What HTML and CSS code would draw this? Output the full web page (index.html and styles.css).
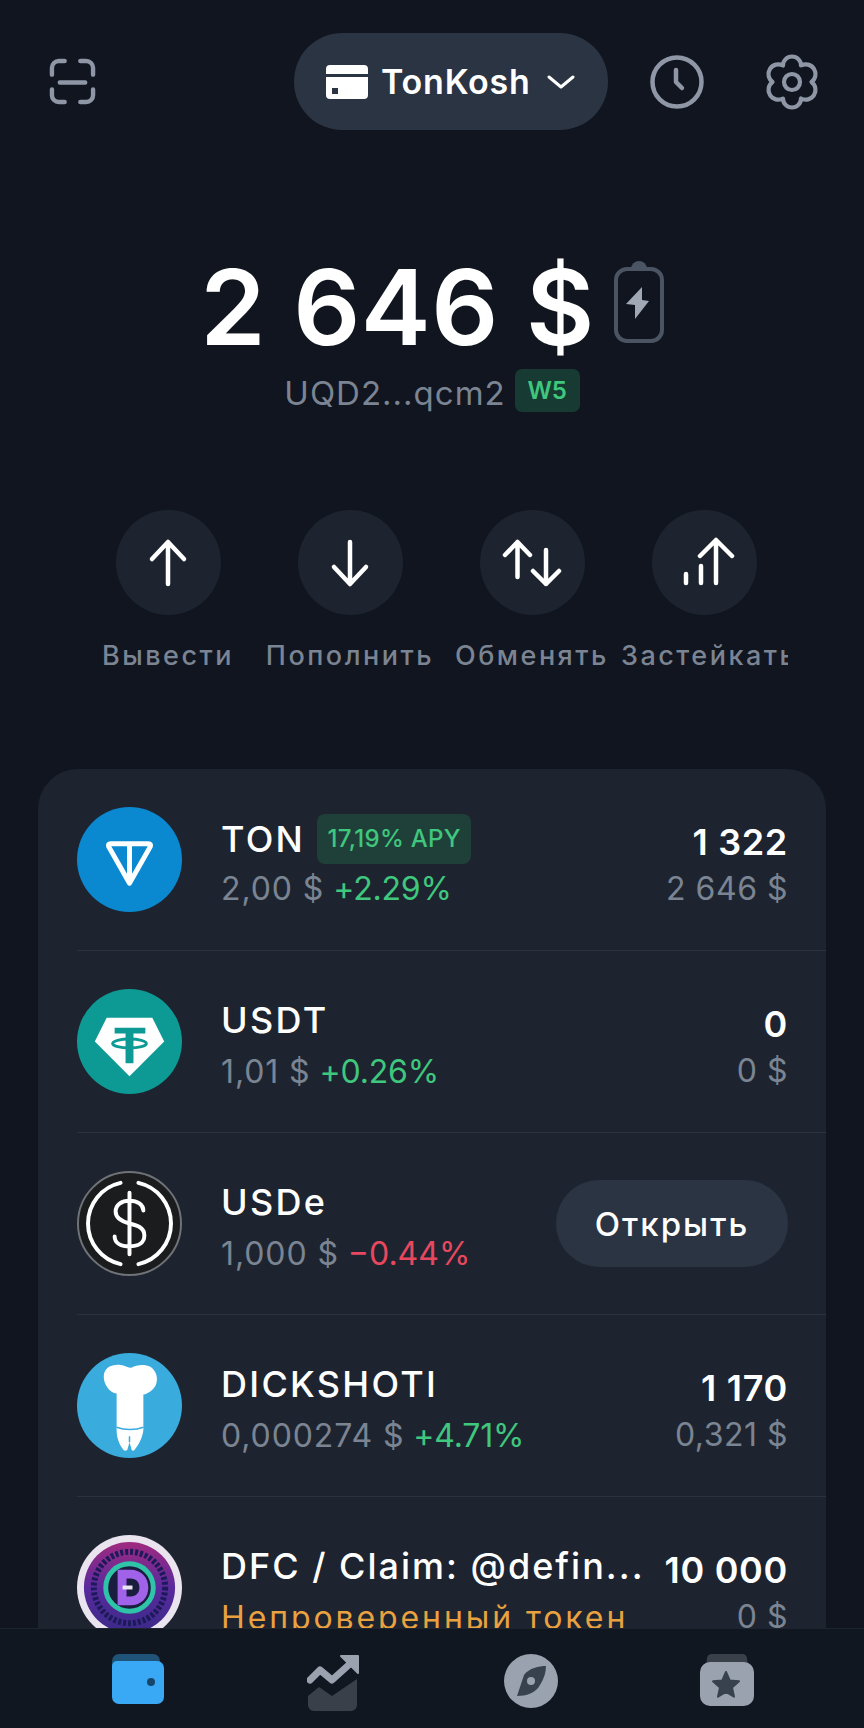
FILE: index.html
```html
<!DOCTYPE html>
<html lang="ru">
<head>
<meta charset="utf-8">
<title>TonKosh</title>
<link rel="stylesheet" href="styles.css">
</head>
<body>
<div class="app">
  <main class="content">
    <header class="topbar">
      <svg class="ic-scan" viewBox="0 0 48 48" fill="none" stroke="#8f97a6" stroke-width="4.5" stroke-linecap="round"><path d="M3 17V10a7 7 0 0 1 7-7h6M32 3h6a7 7 0 0 1 7 7v7M3 32v6a7 7 0 0 0 7 7h6M32 45h6a7 7 0 0 0 7-7v-6M11 25h26"/></svg>
      <div class="wallet-pill">
        <svg class="ic-card" viewBox="0 0 42 34"><path fill="#fff" d="M4 0h34a4 4 0 0 1 4 4v5H0V4a4 4 0 0 1 4-4zM0 12h42v18a4 4 0 0 1-4 4H4a4 4 0 0 1-4-4zm6 11v6h6v-6z"/></svg>
        <span class="wallet-name">TonKosh</span>
        <svg class="ic-chev" viewBox="0 0 28 16" fill="none" stroke="#fff" stroke-width="3" stroke-linecap="round" stroke-linejoin="round"><path d="M2 3l12 10L26 3"/></svg>
      </div>
      <div class="top-right">
        <svg class="ic-clock" viewBox="0 0 54 54" fill="none" stroke="#8f97a6" stroke-width="4.500" stroke-linecap="round" stroke-linejoin="round"><circle cx="27" cy="27" r="24.500"/><path d="M26 15v12l6 6"/></svg>
        <svg class="ic-gear" viewBox="0 0 54 56" fill="none" stroke="#8f97a6" stroke-width="4.200" stroke-linejoin="round"><circle cx="27" cy="28" r="8"/><path d="M18 11.500A9 9 0 0 1 36 11.500 9.800 9.800 0 0 1 46.500 28 9.800 9.800 0 0 1 36 44.500 9 9 0 0 1 18 44.500 9.800 9.800 0 0 1 7.500 28 9.800 9.800 0 0 1 18 11.500z"/></svg>
      </div>
    </header>

    <section class="balance">
      <div class="balance-row">
        <span class="amount">2 646 $</span>
        <svg class="ic-battery" viewBox="0 0 50 84"><path fill="#4b5462" d="M17 10a8 8 0 0 1 16 0v1H17z"/><rect x="2" y="10" width="46" height="72" rx="11" fill="none" stroke="#4b5462" stroke-width="4"/><path fill="#a0a8b5" d="M28 28L12 45l9 1v14l14-18-7-1z"/></svg>
      </div>
      <div class="address-row">
        <span class="address">UQD2...qcm2</span>
        <span class="version">W5</span>
      </div>
    </section>

    <nav class="actions">
      <div class="action">
        <span class="action-circle"><svg viewBox="0 0 60 60" fill="none" stroke="#fff" stroke-width="4.500" stroke-linecap="round" stroke-linejoin="round"><path d="M30 51V10M14 26L30 9l16 17"/></svg></span>
        <span class="action-label">Вывести</span>
      </div>
      <div class="action">
        <span class="action-circle"><svg viewBox="0 0 60 60" fill="none" stroke="#fff" stroke-width="4.500" stroke-linecap="round" stroke-linejoin="round"><path d="M30 9v41M14 34l16 17 16-17"/></svg></span>
        <span class="action-label">Пополнить</span>
      </div>
      <div class="action">
        <span class="action-circle"><svg viewBox="0 0 60 60" fill="none" stroke="#fff" stroke-width="4.500" stroke-linecap="round" stroke-linejoin="round"><path d="M15.500 44V9M3 22L15.500 9 28 22M44 17v34M31 38l13 13 13-13"/></svg></span>
        <span class="action-label">Обменять</span>
      </div>
      <div class="action">
        <span class="action-circle"><svg viewBox="0 0 60 60" fill="none" stroke="#fff" stroke-width="4.500" stroke-linecap="round" stroke-linejoin="round"><path d="M41 50V7M25 23L41 7l16 16M11 50v-9M26 50V33"/></svg></span>
        <span class="action-label">Застейкать</span>
      </div>
    </nav>

    <section class="assets">
      <article class="asset">
        <svg class="logo" viewBox="0 0 106 106"><circle cx="53" cy="53" r="53" fill="#0a88d0"/><path fill="none" stroke="#fff" stroke-width="5" stroke-linejoin="round" d="M34 37h38q3 0 2 3L53 77 32 40q-1-3 2-3zM53 37v40"/></svg>
        <div class="asset-info has-badge">
          <div class="asset-name"><span>TON</span><span class="apy">17,19% APY</span></div>
          <div class="asset-sub"><span class="price">2,00 $</span> <span class="up">+2.29%</span></div>
        </div>
        <div class="asset-values"><span class="qty">1 322</span><span class="fiat">2 646 $</span></div>
      </article>
      <article class="asset">
        <svg class="logo" viewBox="0 0 106 106"><circle cx="53" cy="53" r="53" fill="#0e9a94"/><path fill="#fff" d="M30 29h46l12 24-35 35-35-35z"/><path fill="#0e9a94" d="M38 39h31v6H57v30h-8V45H38z"/><ellipse cx="53" cy="55" rx="17" ry="4.500" fill="none" stroke="#0e9a94" stroke-width="3"/></svg>
        <div class="asset-info">
          <div class="asset-name"><span>USDT</span></div>
          <div class="asset-sub"><span class="price">1,01 $</span> <span class="up">+0.26%</span></div>
        </div>
        <div class="asset-values"><span class="qty">0</span><span class="fiat">0 $</span></div>
      </article>
      <article class="asset">
        <svg class="logo" viewBox="0 0 106 106"><circle cx="53" cy="53" r="52" fill="#1b1c1e" stroke="#6f7277" stroke-width="2"/><g fill="none" stroke="#fff" stroke-width="4" stroke-linecap="round"><path d="M44 12A42 42 0 0 0 44 94M62 12A42 42 0 0 1 62 94"/><path d="M53 22v62M67 40c0-6-6-10-14-10s-14 4-14 11 6 10 14 12 15 4 15 12-7 11-15 11-15-3-15-10"/></g></svg>
        <div class="asset-info">
          <div class="asset-name"><span>USDe</span></div>
          <div class="asset-sub"><span class="price">1,000 $</span> <span class="down">−0.44%</span></div>
        </div>
        <button class="open-btn">Открыть</button>
      </article>
      <article class="asset">
        <svg class="logo" viewBox="0 0 106 106"><circle cx="53" cy="53" r="53" fill="#39abdc"/><path fill="#fff" d="M40 41C33 40 27 32 27 24 27 14 36 11 44 12 48 12 51 15 55 15 60 12 68 11 74 14 80 18 82 25 80 31 78 37 72 41 67 42L67 78C66 86 62 93 58 98 57 99 55 99 55 97L53 90 51 97C51 99 48 99 47 98 43 93 40 86 40 78Z"/><path fill="none" stroke="#39abdc" stroke-width="1.500" d="M40 75c8 3 19 3 27 0M53 90v-6"/></svg>
        <div class="asset-info">
          <div class="asset-name"><span>DICKSHOTI</span></div>
          <div class="asset-sub"><span class="price">0,000274 $</span> <span class="up">+4.71%</span></div>
        </div>
        <div class="asset-values"><span class="qty">1 170</span><span class="fiat">0,321 $</span></div>
      </article>
      <article class="asset">
        <svg class="logo" viewBox="0 0 106 106"><defs><linearGradient id="dfc" x1="0" y1="0" x2="0" y2="1"><stop offset="0" stop-color="#a02a80"/><stop offset=".5" stop-color="#5a2a9c"/><stop offset="1" stop-color="#3a2a88"/></linearGradient></defs><circle cx="53" cy="53" r="53" fill="#e9e4ee"/><circle cx="53" cy="53" r="46" fill="url(#dfc)"/><circle cx="53" cy="53" r="36" fill="none" stroke="#1c1a5a" stroke-width="6" stroke-dasharray="3 2"/><circle cx="53" cy="53" r="26" fill="#1a1d3e"/><circle cx="53" cy="53" r="24" fill="none" stroke="#2fc3a8" stroke-width="5"/><path fill="#a062e8" d="M41 35h13c11 0 18 8 18 18s-7 18-18 18H41zm9 9v18h4c6 0 9-4 9-9s-3-9-9-9z"/><path fill="#e9e4ee" d="M46 51h10v4H46z"/></svg>
        <div class="asset-info">
          <div class="asset-name dfc-name"><span>DFC / Claim: @defin...</span></div>
          <div class="asset-sub warn">Непроверенный токен</div>
        </div>
        <div class="asset-values"><span class="qty">10 000</span><span class="fiat">0 $</span></div>
      </article>
    </section>
  </main>

  <footer class="tabbar">
    <svg class="tab" viewBox="0 0 54 50"><path fill="#1f5478" d="M8 0h34a7 7 0 0 1 7 7v8H1V7a7 7 0 0 1 7-7z"/><path fill="#3aa9f5" d="M6 7h40a7 7 0 0 1 7 7v29a7 7 0 0 1-7 7H8a7 7 0 0 1-7-7V12a5 5 0 0 1 5-5z"/><circle cx="40" cy="28" r="4" fill="#17466a"/></svg>
    <svg class="tab" viewBox="0 0 54 58"><path fill="#3a404a" d="M1 42l11-9 13 9 25-17v26a6 6 0 0 1-6 6H7a6 6 0 0 1-6-6z"/><path fill="none" stroke="#9aa2b0" stroke-width="7" stroke-linecap="round" stroke-linejoin="round" d="M3 26l10-10 12 10L45 8"/><path fill="#9aa2b0" stroke="#9aa2b0" stroke-width="2" stroke-linejoin="round" d="M34 2h17v17z"/></svg>
    <svg class="tab" viewBox="0 0 54 54"><circle cx="27" cy="27" r="27" fill="#9aa2b0"/><path fill="#38414e" d="M42 12C35 12 25 14 20 21L13 42C22 42 32 39 36 31 40 25 42 18 42 12Z"/><circle cx="27" cy="27" r="4" fill="#9aa2b0"/></svg>
    <svg class="tab" viewBox="0 0 54 52"><path fill="#3a404a" d="M11 0h32a5 5 0 0 1 4 4l1 10H6l1-10a5 5 0 0 1 4-4z"/><rect y="8" width="54" height="44" rx="10" fill="#9aa2b0"/><path fill="#38414e" stroke="#38414e" stroke-width="2" stroke-linejoin="round" d="M26 18l3.700 8.500 9.300.8-7 6.200 2 9.200-8-4.800-8 4.800 2-9.200-7-6.200 9.300-.8z"/></svg>
  </footer>
</div>
</body>
</html>
```

FILE: styles.css
```css
* { box-sizing: border-box; margin: 0; padding: 0; }
html, body { height: 100%; background: #10151f; }
body { font-family: Inter, "Liberation Sans", sans-serif; color: #fff; overflow: hidden; }
.app { width: 864px; height: 1728px; display: flex; flex-direction: column; overflow: hidden; }
.content { flex: 1; min-height: 0; overflow: hidden; }

.topbar { height: 97px; margin-top: 33px; padding-left: 49px; display: flex; align-items: center; }
.ic-scan { width: 47px; height: 47px; margin-right: 198px; }
.wallet-pill { width: 314px; height: 97px; border-radius: 48px; background: #2b3442; display: flex; align-items: center; padding-left: 32px; }
.ic-card { width: 42px; height: 34px; }
.wallet-name { font-size: 34px; font-weight: 600; margin-left: 13px; letter-spacing: .8px; }
.ic-chev { width: 28px; height: 16px; margin-left: 16px; }
.top-right { display: flex; align-items: center; margin-left: 42px; gap: 61px; }
.ic-clock { width: 54px; height: 54px; }
.ic-gear { width: 54px; height: 56px; }

.balance { margin-top: 131px; display: flex; flex-direction: column; align-items: center; }
.balance-row { display: flex; align-items: center; gap: 19px; height: 92px; }
.amount { font-size: 105px; font-weight: 600; line-height: 92px; letter-spacing: .5px; white-space: nowrap; }
.ic-battery { width: 50px; height: 84px; margin-bottom: 12px; }
.address-row { display: flex; align-items: center; gap: 9px; margin-top: 20px; }
.address { font-size: 33px; color: #7b8492; letter-spacing: 1px; }
.version { width: 65px; height: 43px; margin-top: -6px; border-radius: 7px; background: #173a33; color: #3fc77e; font-size: 24px; font-weight: 600; display: flex; align-items: center; justify-content: center; }

.actions { display: flex; margin-top: 97px; padding-left: 103px; }
.action { display: flex; flex-direction: column; align-items: center; gap: 23px; }
.action:nth-child(1) { width: 130px; }
.action:nth-child(2) { width: 170px; margin-left: 32px; }
.action:nth-child(3) { width: 154px; margin-left: 20px; }
.action:nth-child(4) { width: 167px; margin-left: 12px; overflow: hidden; }
.action:nth-child(4) .action-label { align-self: flex-start; }
.action-circle { width: 105px; height: 105px; border-radius: 50%; background: #1d2430; display: flex; align-items: center; justify-content: center; }
.action-circle svg { width: 60px; height: 60px; }
.action-label { font-size: 27px; font-weight: 500; color: #7b8492; line-height: 36px; white-space: nowrap; letter-spacing: 2.5px; }

.assets { margin: 95px 38px 0; background: #1d2430; border-radius: 40px 40px 0 0; padding-left: 39px; }
.asset { height: 182px; display: flex; align-items: center; padding-right: 38px; border-bottom: 1px solid #2b3340; }
.logo { width: 105px; height: 105px; flex: none; margin-right: 39px; }
.asset-info { flex: 1; min-width: 0; display: flex; flex-direction: column; gap: 10px; padding-top: 8px; }
.asset-info.has-badge { gap: 8px; }
.asset-name { font-size: 36px; font-weight: 500; line-height: 42px; letter-spacing: 2.3px; display: flex; align-items: center; gap: 12px; white-space: nowrap; }
.dfc-name { letter-spacing: 2px; }
.apy { height: 50px; width: 154px; margin: -4px 0; border-radius: 8px; background: #1f4039; color: #3fc77e; font-size: 24px; font-weight: 500; letter-spacing: .3px; display: flex; align-items: center; justify-content: center; }
.asset-sub { font-size: 32px; line-height: 42px; color: #7b8492; white-space: nowrap; }
.price { letter-spacing: .9px; }
.up { color: #3fc77e; letter-spacing: -.2px; }
.down { color: #e8485f; }
.warn { color: #e9a23f; letter-spacing: 2.9px; }
.asset-values { display: flex; flex-direction: column; align-items: flex-end; gap: 4px; flex: none; padding-top: 11px; }
.qty { font-size: 36px; font-weight: 600; line-height: 44px; letter-spacing: .7px; white-space: nowrap; }
.fiat { font-size: 32px; line-height: 42px; letter-spacing: .5px; color: #7b8492; white-space: nowrap; }
.open-btn { width: 232px; height: 87px; border: 0; border-radius: 44px; background: #2b3442; color: #fff; font: 500 33px Inter, "Liberation Sans", sans-serif; letter-spacing: 2px; }

.tabbar { flex: none; height: 100px; background: #111720; border-top: 1px solid #1d2430; display: flex; justify-content: space-between; padding: 25px 110px 0 111px; align-items: flex-start; }
.tab { width: 54px; height: auto; }
```
